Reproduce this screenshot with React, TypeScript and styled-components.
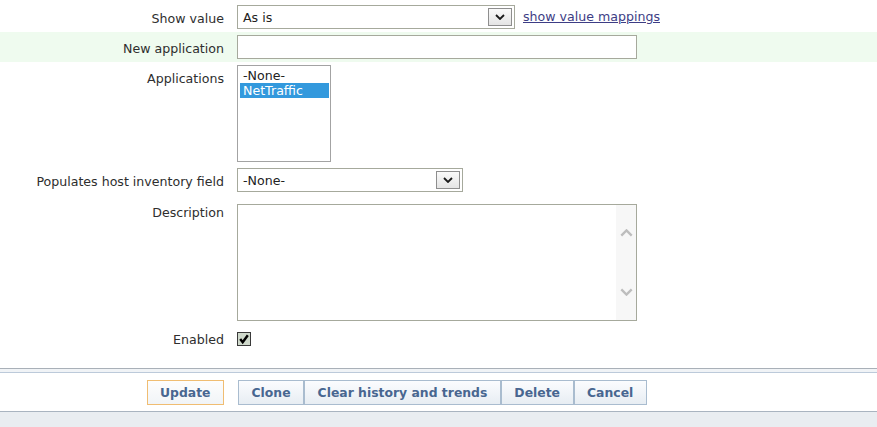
import styled, { createGlobalStyle } from 'styled-components';

const GlobalStyle = createGlobalStyle`
  body {
    margin: 0;
    background: #fff;
    font-family: "DejaVu Sans", Verdana, sans-serif;
    font-size: 12.6px;
    color: #2e2e2e;
  }
`;

const Chevron = ({ up = false, color = '#1a1a1a', size = 10 }: { up?: boolean; color?: string; size?: number }) => (
  <svg width={size} height={Math.round(size * 0.6)} viewBox="0 0 10 6">
    <path
      d={up ? 'M1 5 L5 1 L9 5' : 'M1 1 L5 5 L9 1'}
      fill="none"
      stroke={color}
      strokeWidth="1.8"
    />
  </svg>
);

const CheckMark = () => (
  <svg width="14" height="14" viewBox="0 0 14 14">
    <rect x="0.5" y="0.5" width="13" height="13" fill="#cfd9cb" stroke="#3a3a3a" />
    <path d="M3.2 7 L5.7 10.2 L10.8 3.2" fill="none" stroke="#000" strokeWidth="2.4" />
  </svg>
);

const App = () => {
  return (
    <>
      <GlobalStyle />
      <Page>
        <Form>
          <Row>
            <Label>Show value</Label>
            <Field>
              <Select $width={278}>
                <SelectValue>As is</SelectValue>
                <ArrowBox>
                  <Chevron />
                </ArrowBox>
              </Select>
              <MapLink href="#">show value mappings</MapLink>
            </Field>
          </Row>
          <Row $highlight>
            <Label>New application</Label>
            <Field>
              <TextInput type="text" />
            </Field>
          </Row>
          <Row>
            <Label>Applications</Label>
            <Field>
              <ListBox>
                <Option>-None-</Option>
                <Option $selected>NetTraffic</Option>
              </ListBox>
            </Field>
          </Row>
          <Row>
            <Label>Populates host inventory field</Label>
            <Field>
              <Select $width={226}>
                <SelectValue>-None-</SelectValue>
                <ArrowBox>
                  <Chevron />
                </ArrowBox>
              </Select>
            </Field>
          </Row>
          <Row $top={9}>
            <Label $lineHeight={17} $offset={0}>Description</Label>
            <Field>
              <TextAreaBox>
                <TextArea />
                <ScrollTrack>
                  <Chevron up color="#bdbdbd" size={13} />
                  <Chevron color="#bdbdbd" size={13} />
                </ScrollTrack>
              </TextAreaBox>
            </Field>
          </Row>
          <Row>
            <Label $offset={1}>Enabled</Label>
            <Field>
              <CheckBox>
                <CheckMark />
              </CheckBox>
            </Field>
          </Row>
        </Form>
        <Rule />
        <ButtonBar>
          <Primary>
            <Button $primary>Update</Button>
          </Primary>
          <Group>
            <Button>Clone</Button>
            <Button>Clear history and trends</Button>
            <Button>Delete</Button>
            <Button>Cancel</Button>
          </Group>
        </ButtonBar>
        <Bottom />
      </Page>
    </>
  );
};

export default App;

const Page = styled.div`
  min-height: 100vh;
  display: flex;
  flex-direction: column;
  padding-top: 2px;
  box-sizing: border-box;
`;

const Form = styled.div`
  display: flex;
  flex-direction: column;
  padding-bottom: 14px;
`;

const Row = styled.div<{ $highlight?: boolean; $top?: number }>`
  display: grid;
  grid-template-columns: 224px 1fr;
  column-gap: 13px;
  padding: ${(p) => p.$top ?? 3}px 0 3px;
  background: ${(p) => (p.$highlight ? '#effbef' : 'transparent')};
`;

const Label = styled.div<{ $lineHeight?: number; $offset?: number }>`
  text-align: right;
  line-height: ${(p) => p.$lineHeight ?? 24}px;
  padding-top: ${(p) => p.$offset ?? 2}px;
  margin-bottom: ${(p) => -(p.$offset ?? 2)}px;
  white-space: nowrap;
`;

const Field = styled.div`
  display: flex;
  align-items: flex-start;
  gap: 8px;
`;

const Select = styled.div<{ $width: number }>`
  width: ${(p) => p.$width}px;
  height: 24px;
  box-sizing: border-box;
  border: 1px solid #a6a99c;
  background: #fff;
  display: flex;
  align-items: center;
  justify-content: space-between;
  padding: 0 2px 0 5px;
`;

const SelectValue = styled.span`
  color: #222;
`;

const ArrowBox = styled.span`
  width: 24px;
  height: 18px;
  box-sizing: border-box;
  border: 1px solid #8e8e8e;
  background: linear-gradient(#fafafa, #e4e4e4);
  display: flex;
  align-items: center;
  justify-content: center;
`;

const MapLink = styled.a`
  color: #3d3d85;
  text-decoration: underline;
  line-height: 24px;
`;

const TextInput = styled.input`
  width: 400px;
  height: 24px;
  box-sizing: border-box;
  border: 1px solid #a6a99c;
  background: #fff;
  outline: none;
  margin: 0;
  font: inherit;
`;

const ListBox = styled.div`
  width: 94px;
  height: 97px;
  box-sizing: border-box;
  border: 1px solid #a3a3a3;
  background: #fff;
  padding: 2px 1px 2px 2px;
`;

const Option = styled.div<{ $selected?: boolean }>`
  height: 15px;
  line-height: 15px;
  padding-left: 3px;
  color: ${(p) => (p.$selected ? '#fff' : '#222')};
  background: ${(p) => (p.$selected ? '#3399dd' : 'transparent')};
`;

const TextAreaBox = styled.div`
  width: 400px;
  height: 117px;
  box-sizing: border-box;
  border: 1px solid #a6a99c;
  background: #fff;
  display: flex;
`;

const TextArea = styled.textarea`
  flex: 1;
  border: none;
  outline: none;
  resize: none;
  margin: 0;
  font: inherit;
  background: transparent;
`;

const ScrollTrack = styled.div`
  width: 20px;
  background: #f7f7f7;
  display: flex;
  flex-direction: column;
  align-items: center;
  justify-content: space-between;
  padding: 24px 0 24px;
`;

const CheckBox = styled.span`
  display: flex;
  margin-top: 5px;
`;

const Rule = styled.div`
  height: 3px;
  border-top: 1px solid #a9b0b8;
  border-bottom: 1px solid #bccada;
  background: #f0f3f6;
`;

const ButtonBar = styled.div`
  display: grid;
  grid-template-columns: 224px 1fr;
  column-gap: 13px;
  padding: 7px 0 6px;
`;

const Primary = styled.div`
  display: flex;
  justify-content: flex-end;
`;

const Group = styled.div`
  display: flex;
  margin-left: 1px;
`;

const Button = styled.button<{ $primary?: boolean }>`
  height: 25px;
  padding: 0 12.5px;
  margin: 0;
  font-family: "DejaVu Sans", Verdana, sans-serif;
  font-size: 12.4px;
  font-weight: bold;
  color: #486690;
  border: 1px solid ${(p) => (p.$primary ? '#f0bd72' : '#a9bccf')};
  border-radius: 0;
  background: ${(p) =>
    p.$primary
      ? 'linear-gradient(#fdfdfd, #f1f4f7)'
      : 'linear-gradient(#fbfcfe, #e7edf3)'};
  cursor: pointer;
`;

const Bottom = styled.div`
  flex: 1;
  border-top: 1px solid #a9b4c0;
  background: #e9edf1;
`;
